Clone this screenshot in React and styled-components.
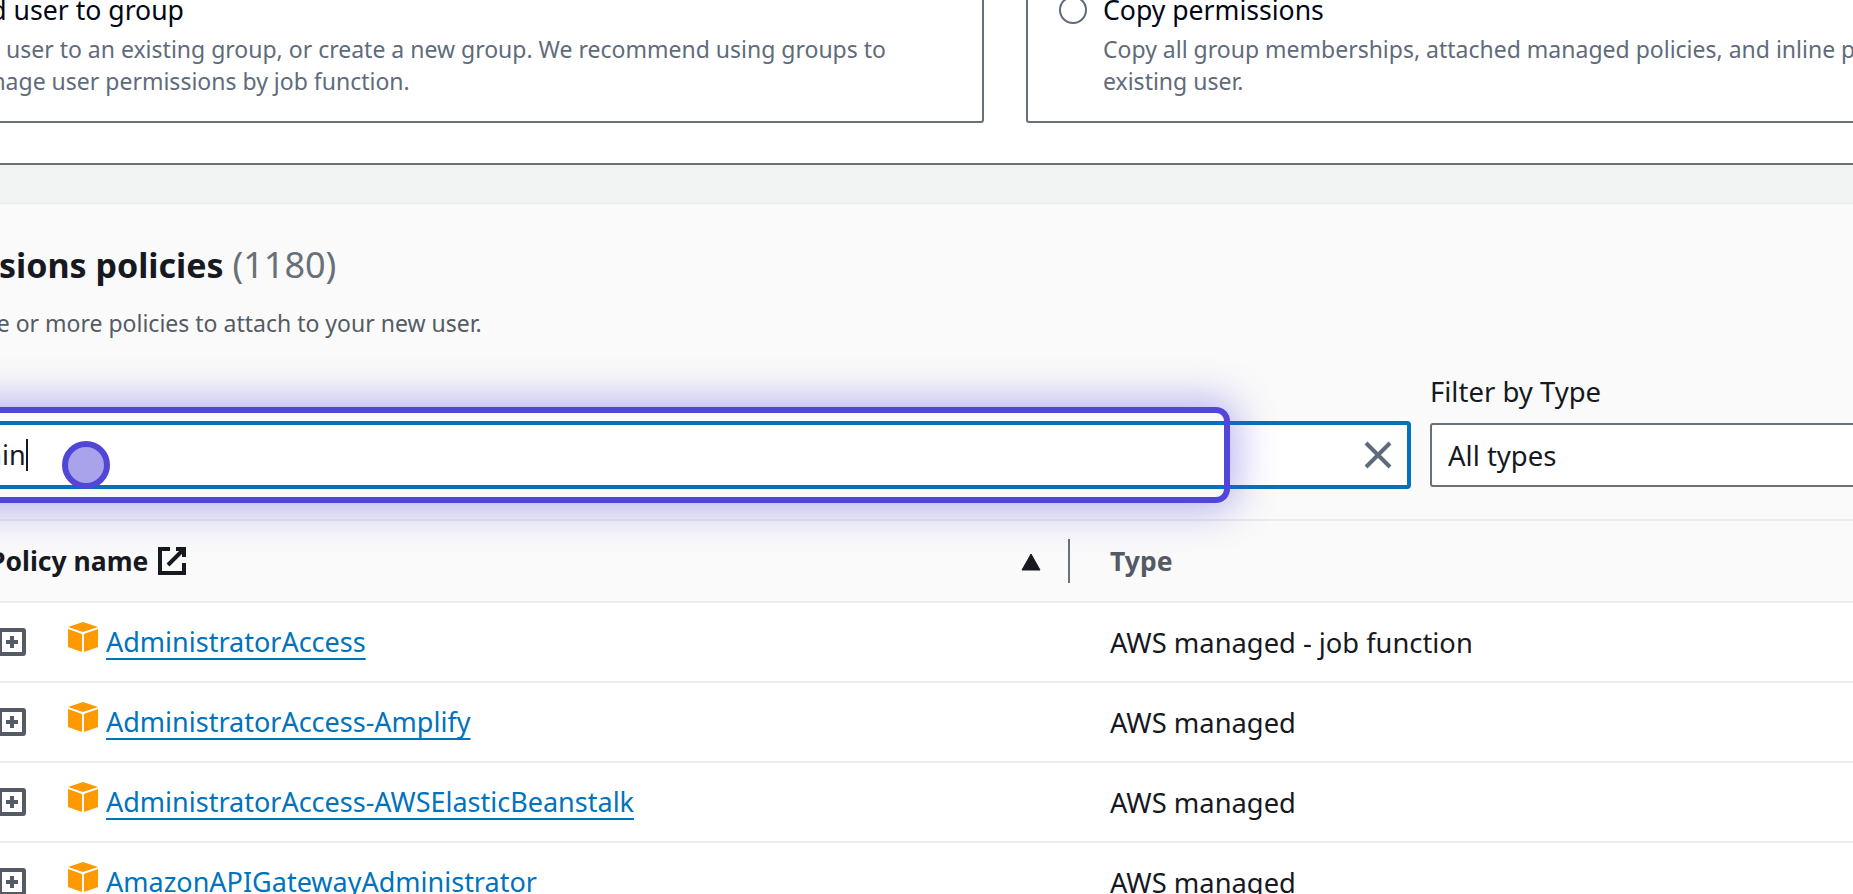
import React from "react";
import styled, { createGlobalStyle } from "styled-components";

const Global = createGlobalStyle`
  html, body { margin: 0; padding: 0; height: 894px; overflow: hidden; background: #fff; }
  body { font-family: "Noto Sans", "Open Sans", sans-serif; color: #000716; }
`;
const Viewport = styled.div`
  width: 1853px; height: 894px; overflow: hidden; position: relative;
`;
const Page = styled.div`
  width: 2500px; margin-left: -120px; margin-top: -48px;
`;
const Cards = styled.div`
  display: grid; grid-template-columns: 1104px 1104px; gap: 42px;
  padding-bottom: 40px; border-bottom: 2px solid #687078;
`;
const Card = styled.div`
  box-sizing: border-box; height: 171px; border: 2px solid #687078; border-radius: 3px;
  padding: 39px 30px 0 31px; display: grid; grid-template-columns: 28px 1fr; column-gap: 16px; background: #fff;
`;
const Radio = styled.span`
  box-sizing: border-box; width: 28px; height: 28px; border: 2px solid #5f6b7a; border-radius: 50%;
  margin-top: 3px; background: #fff;
`;
const CardTitle = styled.div`font-size: 26.6px; line-height: 34px; color: #000716;`;
const CardDesc = styled.div`font-size: 23px; line-height: 32px; color: #5f6b7a; margin-top: 6px; max-width: 960px;`;
const Band = styled.div`height: 38px; background: #f2f3f3; border-bottom: 1px solid #eaeded;`;
const Panel = styled.div`background: #fafafa; padding-top: 39px;`;
const Heading = styled.h2`margin: 0; padding-left: 0; font-size: 34px; line-height: 44px; font-weight: 700; color: #16191f;`;
const Count = styled.span`font-size: 36px; font-weight: 400; color: #687078;`;
const Sub = styled.p`margin: 20px 0 0; font-size: 23px; line-height: 32px; color: #545b64;`;
const Intro = styled.div`padding-left: 2px;`;
const Filters = styled.div`
  display: flex; align-items: flex-end; gap: 19px; margin: 36px 0 0 47px; padding-bottom: 30px;
  border-bottom: 2px solid #eaeded;
`;
const SearchBox = styled.div`
  box-sizing: border-box; width: 1484px; height: 68px; border: 4px solid #0073bb; border-radius: 4px; background: #fff;
  display: flex; align-items: center; justify-content: space-between; padding: 0 15px 0 14px; flex: none;
`;
const SearchValue = styled.span`font-size: 27px; line-height: 32px; border-right: 2px solid #16191f; color: #16191f;`;
const SelectCol = styled.div`display: flex; flex-direction: column; gap: 14px; padding-bottom: 2px;`;
const SelectLabel = styled.label`font-size: 27.5px; line-height: 34px; color: #16191f;`;
const Select = styled.div`
  box-sizing: border-box; width: 900px; height: 64px; border: 2px solid #687078; border-radius: 3px; background: #fff;
  display: flex; align-items: center; padding: 0 16px; font-size: 27.5px; color: #16191f;
`;
const HeaderRow = styled.div`
  height: 80px; display: grid; grid-template-columns: 1190px 1fr; align-items: center;
  background: #fafafa; border-bottom: 2px solid #eaeded;
`;
const NameHead = styled.div`
  box-sizing: border-box; display: flex; align-items: center; height: 44px; margin-left: 109px;
  border-right: 2px solid #687078; font-size: 26.5px; font-weight: 700; color: #16191f; position: relative;
`;
const External = styled.svg`margin-left: 10px;`;
const SortIcon = styled.svg`position: absolute; right: 27px; top: 14px;`;
const TypeHead = styled.div`padding-left: 40px; font-size: 26.5px; font-weight: 700; color: #545b64;`;
const Row = styled.div`
  height: 78px; display: grid; grid-template-columns: 1190px 1fr; align-items: center; background: #fff;
  border-bottom: 2px solid #eaeded;
`;
const NameCell = styled.div`display: flex; align-items: center; padding-left: 118px;`;
const Cube = styled.svg`margin-left: 42px; margin-right: 8px; margin-top: -10px; flex: none;`;
const PolicyLink = styled.a`
  font-size: 27px; line-height: 36px; color: #0073bb; text-decoration: underline; text-decoration-thickness: 2px; text-underline-offset: 6px;
`;
const TypeCell = styled.div`padding-left: 40px; font-size: 27.3px; color: #16191f;`;
const Highlight = styled.div`
  position: absolute; left: -200px; top: 407px; width: 1430px; height: 96px; box-sizing: border-box;
  border: 6px solid #5046d8; border-radius: 14px; box-shadow: 0 0 40px 6px rgba(80,70,216,.42); pointer-events: none;
`;
const Pointer = styled.div`
  position: absolute; left: 62px; top: 441px; width: 48px; height: 48px; box-sizing: border-box; border-radius: 50%;
  border: 6px solid #5046d8; background: #a8a3ea;
`;

const ExpandIcon = () => (
  <svg width="28" height="28" viewBox="0 0 28 28" fill="none" stroke="#545b64">
    <rect x="2" y="2" width="24" height="24" rx="1" strokeWidth="4" />
    <path d="M8 14h12M14 8v12" strokeWidth="4" />
  </svg>
);
const CubeIcon = () => (
  <Cube width="30" height="30" viewBox="0 0 30 30">
    <path d="M15 0 30 5 15 10 0 5Z" fill="#f90" />
    <path d="M0 7 14 12V30L0 25Z" fill="#f90" />
    <path d="M16 12 30 7V25L16 30Z" fill="#f90" />
  </Cube>
);

const rows = [
  ["AdministratorAccess", "AWS managed - job function"],
  ["AdministratorAccess-Amplify", "AWS managed"],
  ["AdministratorAccess-AWSElasticBeanstalk", "AWS managed"],
  ["AmazonAPIGatewayAdministrator", "AWS managed"],
];

export default function App() {
  return (
    <Viewport>
      <Global />
      <Page>
        <Cards>
          <Card>
            <Radio />
            <div>
              <CardTitle>Add user to group</CardTitle>
              <CardDesc>Add user to an existing group, or create a new group. We recommend using groups to manage user permissions by job function.</CardDesc>
            </div>
          </Card>
          <Card>
            <Radio />
            <div>
              <CardTitle>Copy permissions</CardTitle>
              <CardDesc>Copy all group memberships, attached managed policies, and inline policies from an existing user.</CardDesc>
            </div>
          </Card>
        </Cards>
        <Band />
        <Panel>
          <Intro>
            <Heading>Permissions policies <Count>(1180)</Count></Heading>
            <Sub>Choose one or more policies to attach to your new user.</Sub>
          </Intro>
          <Filters>
            <SearchBox>
              <SearchValue>admin</SearchValue>
              <svg width="28" height="28" viewBox="0 0 28 28" fill="none" stroke="#5f6b7a" strokeWidth="4"><path d="M2 2 26 26M26 2 2 26" /></svg>
            </SearchBox>
            <SelectCol>
              <SelectLabel>Filter by Type</SelectLabel>
              <Select>All types</Select>
            </SelectCol>
          </Filters>
          <HeaderRow>
            <NameHead>
              Policy name
              <External width="28" height="28" viewBox="0 0 28 28" fill="none" stroke="#16191f" strokeWidth="4">
                <path d="M12 2H2V26H26V16" />
                <path d="M18 2H26V10M26 2 10 18" />
              </External>
              <SortIcon width="20" height="18" viewBox="0 0 20 18"><path d="M10 1 19 17H1Z" fill="#16191f" stroke="#16191f" strokeLinejoin="round" /></SortIcon>
            </NameHead>
            <TypeHead>Type</TypeHead>
          </HeaderRow>
          {rows.map(([name, type]) => (
            <Row key={name}>
              <NameCell>
                <ExpandIcon />
                <CubeIcon />
                <PolicyLink>{name}</PolicyLink>
              </NameCell>
              <TypeCell>{type}</TypeCell>
            </Row>
          ))}
        </Panel>
      </Page>
      <Highlight />
      <Pointer />
    </Viewport>
  );
}
